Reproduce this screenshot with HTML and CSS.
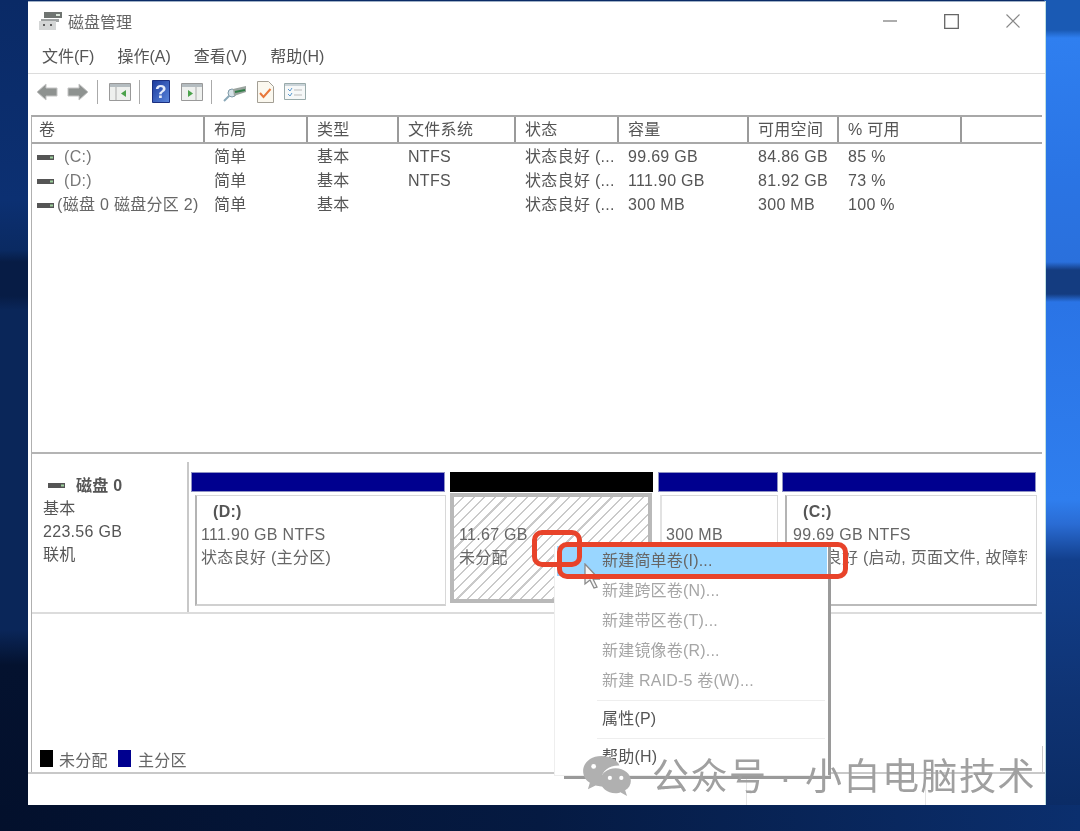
FILE: index.html
```html
<!DOCTYPE html>
<html lang="zh-CN">
<head>
<meta charset="utf-8">
<title>磁盘管理</title>
<link rel="stylesheet" href="styles.css">
</head>
<body>
<div class="desktop">
  <main class="window">
    <header class="titlebar">
      <svg class="app-icon" width="23" height="20" viewBox="0 0 23 20"><path d="M5 1h18v6H5z" fill="#6f7471"/><path d="M17 3h4v2h-4z" fill="#dbe6db"/><path d="M2 8h18v3H2z" fill="#9ea2a2"/><path d="M0 10h17v9H0z" fill="#d4d6d6"/><path d="M4 13h2v2H4zM11 13h2v2h-2z" fill="#5d5d5d"/></svg>
      <span class="title">磁盘管理</span>
      <div class="controls">
        <svg width="14" height="14" viewBox="0 0 14 14"><path d="M0 7h14" stroke="#777" stroke-width="1.2"/></svg>
        <svg width="15" height="15" viewBox="0 0 15 15"><path d="M.7.7h13.600v13.600H.7z" fill="none" stroke="#666" stroke-width="1.300"/></svg>
        <svg width="14" height="14" viewBox="0 0 14 14"><path d="M.5.5l13 13M13.500.5l-13 13" stroke="#888" stroke-width="1.100"/></svg>
      </div>
    </header>
    <nav class="menubar">
      <span>文件(F)</span><span>操作(A)</span><span>查看(V)</span><span>帮助(H)</span>
    </nav>
    <div class="toolbar">
      <svg class="tool" width="22" height="20" viewBox="0 0 22 20"><path d="M1 10l9-8v4h11v8H10v4z" fill="#8e9290" stroke="#c4c4c4"/></svg>
      <svg class="tool" width="22" height="20" viewBox="0 0 22 20"><path d="M21 10l-9-8v4H1v8h11v4z" fill="#8e9290" stroke="#c4c4c4"/></svg>
      <i class="sep"></i>
      <svg class="tool" width="22" height="18" viewBox="0 0 22 18"><path d="M.5.500h21v17H.5z" fill="#eef0ee" stroke="#999"/><path d="M1 1h20v3H1z" fill="#b4bcc0"/><path d="M7 4v13" stroke="#aaa"/><path d="M17 7v7l-5-3.500z" fill="#4ba24b"/></svg>
      <i class="sep"></i>
      <svg class="tool help" width="18" height="23" viewBox="0 0 18 23"><defs><linearGradient id="helpfill" x1="0" y1="0" x2="1" y2="1"><stop offset="0" stop-color="#1c3a9c"/><stop offset="1" stop-color="#5a86dc"/></linearGradient></defs><path d="M.5.500h17v22H.5z" fill="url(#helpfill)" stroke="#1b2f80"/><text x="9" y="18" text-anchor="middle" font-family="Liberation Sans" font-size="19" font-weight="700" fill="#e6ecfa">?</text></svg>
      <svg class="tool" width="22" height="18" viewBox="0 0 22 18"><path d="M.5.500h21v17H.5z" fill="#eef0ee" stroke="#999"/><path d="M1 1h20v3H1z" fill="#b4bcc0"/><path d="M15 4v13" stroke="#aaa"/><path d="M7 7v7l5-3.500z" fill="#4ba24b"/></svg>
      <i class="sep"></i>
      <svg class="tool key" width="24" height="20" viewBox="0 0 24 20"><path d="M1 19l5-5" stroke="#8aa8b8" stroke-width="2"/><circle cx="9" cy="11" r="4" fill="#d6e2e8" stroke="#7d97a5"/><path d="M10 7l13-3v6L11 14z" fill="#9aa39e"/><path d="M12 10l10-2" stroke="#2f7d46" stroke-width="2"/></svg>
      <svg class="tool doc" width="17" height="22" viewBox="0 0 17 22"><path d="M.5.500h11l5 5v16H.5z" fill="#fbf8ef" stroke="#a39f95"/><path d="M3 12l3.500 4 7-8" fill="none" stroke="#e8773a" stroke-width="2"/></svg>
      <svg class="tool" width="22" height="17" viewBox="0 0 22 17"><path d="M.5.500h21v16H.5z" fill="#f6f8f8" stroke="#9aa"/><path d="M1 1h20v2H1z" fill="#c9d3d8"/><path d="M4 6l2 2 2-3M4 11l2 2 2-3" fill="none" stroke="#5b9ad0"/><path d="M10 7h8M10 12h8" stroke="#bbb"/></svg>
    </div>

    <section class="volumes">
      <div class="vol-row vol-head">
        <span>卷</span><span>布局</span><span>类型</span><span>文件系统</span><span>状态</span><span>容量</span><span>可用空间</span><span>% 可用</span><span></span>
      </div>
      <div class="vol-row">
        <span class="name"><svg class="drive" width="17" height="5" viewBox="0 0 17 5"><path d="M0 0h17v5H0z" fill="#555"/><path d="M13 1.500h3v2h-3z" fill="#9cd09c"/></svg><b class="label">(C:)</b></span><span>简单</span><span>基本</span><span>NTFS</span><span>状态良好 (...</span><span>99.69 GB</span><span>84.86 GB</span><span>85 %</span><span></span>
      </div>
      <div class="vol-row">
        <span class="name"><svg class="drive" width="17" height="5" viewBox="0 0 17 5"><path d="M0 0h17v5H0z" fill="#555"/><path d="M13 1.500h3v2h-3z" fill="#9cd09c"/></svg><b class="label">(D:)</b></span><span>简单</span><span>基本</span><span>NTFS</span><span>状态良好 (...</span><span>111.90 GB</span><span>81.92 GB</span><span>73 %</span><span></span>
      </div>
      <div class="vol-row">
        <span class="name"><svg class="drive tight" width="17" height="5" viewBox="0 0 17 5"><path d="M0 0h17v5H0z" fill="#555"/><path d="M13 1.500h3v2h-3z" fill="#9cd09c"/></svg><b class="label tight">(磁盘 0 磁盘分区 2)</b></span><span>简单</span><span>基本</span><span></span><span>状态良好 (...</span><span>300 MB</span><span>300 MB</span><span>100 %</span><span></span>
      </div>
    </section>

    <section class="disks">
      <div class="disk-row">
        <div class="disk-info">
          <div class="disk-name"><svg width="17" height="5" viewBox="0 0 17 5"><path d="M0 0h17v5H0z" fill="#555"/><path d="M13 1.500h3v2h-3z" fill="#9cd09c"/></svg><strong>磁盘 0</strong></div>
          <div>基本</div>
          <div>223.56 GB</div>
          <div>联机</div>
        </div>
        <div class="partitions">
          <div class="part part-d">
            <div class="cap"></div>
            <div class="body"><strong>(D:)</strong><div>111.90 GB NTFS</div><div>状态良好 (主分区)</div></div>
          </div>
          <div class="part part-u">
            <div class="cap black"></div>
            <div class="body hatch"><strong>&nbsp;</strong><div>11.67 GB</div><div>未分配</div></div>
          </div>
          <div class="part part-s">
            <div class="cap"></div>
            <div class="body"><strong>&nbsp;</strong><div>300 MB</div><div>状态良好</div></div>
          </div>
          <div class="part part-c">
            <div class="cap"></div>
            <div class="body"><strong>(C:)</strong><div>99.69 GB NTFS</div><div class="clip">状态良好 (启动, 页面文件, 故障转储, 主分区)</div></div>
          </div>
        </div>
      </div>
      <div class="legend">
        <i class="swatch black"></i><span>未分配</span><i class="swatch blue"></i><span>主分区</span>
      </div>
    </section>
    <footer class="statusbar"><i></i><i></i></footer>
  </main>

  <div class="menu">
    <div class="item active">新建简单卷(I)...</div>
    <div class="item off">新建跨区卷(N)...</div>
    <div class="item off">新建带区卷(T)...</div>
    <div class="item off">新建镜像卷(R)...</div>
    <div class="item off">新建 RAID-5 卷(W)...</div>
    <hr>
    <div class="item">属性(P)</div>
    <hr>
    <div class="item">帮助(H)</div>
  </div>
  <svg class="cursor" width="16" height="26" viewBox="0 0 16 26"><path d="M1 1v20l5-4 4 8 3-1-4-8h6z" fill="#f4f4f4" stroke="#8a8a8a" stroke-width="1.300"/></svg>
  <div class="mark mark-small"></div>
  <div class="mark mark-wide"></div>
  <div class="watermark">
    <svg width="52" height="42" viewBox="0 0 52 44"><path d="M20 1C9 1 1 8 1 17c0 5 3 10 7 12l-2 7 8-4c2 0 4 1 6 1h2c-1-2-2-5-2-7 0-9 8-15 18-15h1C37 5 29 1 20 1z" fill="#b0b0b0"/><path d="M35 14c-9 0-16 6-16 13s7 13 16 13c2 0 4 0 5-1l7 4-2-6c4-2 6-6 6-10 0-7-7-13-16-13z" fill="#b0b0b0"/><circle cx="12" cy="12" r="2.500" fill="#fff"/><circle cx="29" cy="24" r="2.200" fill="#fff"/><circle cx="41" cy="24" r="2.200" fill="#fff"/></svg>
    <span>公众号 · 小白电脑技术</span>
  </div>
</div>
</body>
</html>
```

FILE: styles.css
```css
* { box-sizing: border-box; }
html, body { margin: 0; height: 100%; }
body { overflow: hidden; background: #06173d; font-family: "Liberation Sans", "Noto Sans CJK SC", sans-serif; }

.desktop {
  position: relative;
  width: 1080px;
  height: 831px;
  overflow: hidden;
  padding: 1px 35px 26px 28px;
  filter: blur(0.7px);
  background:
    linear-gradient(90deg, #03102c 0%, #051a42 50%, #0b2f6e 100%) left bottom / 100% 26px no-repeat,
    linear-gradient(180deg, #1a5ab4 0, #1a5ab4 30px, #2f7ff0 38px, #2a74e4 180px, #2a70dc 262px, #143c80 270px, #143c80 294px, #2a74e6 302px, #2f7eee 500px, #2a6cd4 524px, #123f8c 560px, #0f3373 700px, #0a2a62 100%) right top / 36px 100% no-repeat,
    linear-gradient(180deg, #0a2a66 0, #0c3072 200px, #0a2a62 250px, #071c45 262px, #071c45 296px, #0a2659 310px, #0a2659 630px, #04122f 665px, #03102c 100%);
}
.window {
  position: relative;
  display: flex;
  flex-direction: column;
  width: 1017px;
  height: 804px;
  background: #fff;
  color: #555;
  font-size: 16px;
  letter-spacing: 0.3px;
  border-top: 1px solid #9fb0c6;
  box-shadow: 1px 0 0 #bfe0e0;
}

.titlebar { display: flex; align-items: center; height: 38px; margin-bottom: 1px; padding: 0 25px 0 11px; flex: none; }
.app-icon { margin-right: 6px; }
.title { font-size: 16px; color: #666; letter-spacing: 0; }
.controls { margin-left: auto; display: flex; gap: 47px; align-items: center; }

.menubar { display: flex; gap: 23px; height: 33px; padding: 5px 14px 0; flex: none; border-bottom: 1px solid #dcdcdc; line-height: 22px; letter-spacing: 0; }
.toolbar { display: flex; align-items: center; height: 41px; padding: 0 8px 6px; flex: none; }
.tool { flex: none; margin-right: 9px; }
.tool.help { margin-left: 1px; margin-right: 11px; }
.tool.doc { margin-left: 1px; margin-right: 10px; }
.sep { width: 1px; height: 24px; background: #aaa; margin: 0 11px 0 -1px; flex: none; }

.volumes { height: 339px; flex: none; margin: 0 3px; border-top: 2px solid #a8a8a8; border-bottom: 2px solid #b4b4b4; border-left: 1px solid #b0b0b0; }
.vol-row { display: grid; grid-template-columns: 173px 103px 91px 117px 103px 130px 90px 123px 1fr; height: 24px; align-items: center; line-height: 24px; }
.vol-row > span { padding-left: 9px; white-space: nowrap; overflow: hidden; }
.vol-row .name { padding-left: 5px; overflow: visible; display: flex; align-items: center; }
.vol-head { height: 27px; margin-bottom: 1px; border-bottom: 2px solid #a8a8a8; }
.vol-head > span { border-right: 2px solid #9a9a9a; height: 25px; line-height: 25px; }
.vol-head > span:first-child { padding-left: 7px; }
.vol-head > span:last-child { border-right: 0; }
.drive { flex: none; margin-right: 10px; }
.drive.tight { margin-right: 3px; }
.label { font-weight: 400; color: #777; }
.label.tight { color: #666; }

.disks { flex: 1; display: flex; flex-direction: column; margin: 0 3px; min-height: 0; border-left: 1px solid #b0b0b0; }
.disk-row { display: flex; height: 144px; border-bottom: 2px solid #dcdcdc; margin-top: 16px; flex: none; }
.disk-info { width: 157px; flex: none; margin-top: -8px; padding: 12px 0 0 11px; line-height: 23px; border-right: 2px solid #c8c8c8; }
.disk-name { display: flex; align-items: center; gap: 11px; padding-left: 5px; }
.disk-name strong { color: #555; }
.partitions { display: flex; gap: 4px; padding: 2px 0 6px 2px; flex: 1; min-width: 0; }
.part { display: flex; flex-direction: column; flex: none; }
.part-d { width: 255px; }
.part-u { width: 204px; }
.part-s { width: 120px; }
.part-c { width: 255px; }
.cap { height: 20px; margin-right: 1px; background: #00008f; flex: none; box-shadow: inset 0 0 0 1px #8f92c4; }
.part-s .cap { margin-right: 0; }
.cap.black { background: #000; box-shadow: none; }
.body { flex: 1; min-height: 0; margin: 3px 0 0 4px; padding: 4px 0 0 4px; border: 1px solid #d8d8d8; border-left: 2px solid #b4b4b4; border-bottom: 2px solid #d0d0d0; line-height: 23px; white-space: nowrap; color: #666; overflow: hidden; }
.body strong { display: block; padding-left: 12px; color: #555; }
.part-s .body { margin-left: 2px; padding-left: 4px; border-left-color: #e2e2e2; }
.part-c .body { margin-left: 3px; padding-left: 6px; padding-right: 9px; border-bottom-color: #bbb; }
.part-c .body strong { padding-left: 10px; }
.clip { overflow: hidden; }
.part-u .hatch {
  margin: 1px 2px 3px 0;
  padding: 3px 0 0 5px;
  border: 4px solid #b9b9b9;
  background: repeating-linear-gradient(135deg, #fff 0 6px, #cacaca 6px 7.500px);
}

.legend { margin-top: auto; margin-right: -1px; display: flex; align-items: center; height: 26px; padding: 0 0 1px 8px; color: #666; border-right: 1px solid #c8c8c8; }
.legend span { margin: 0 10px 0 6px; }
.legend i + span + i + span { margin-left: 7px; }
.swatch { width: 13px; height: 17px; flex: none; }
.swatch.black { background: #000; }
.swatch.blue { background: #00008f; }
.statusbar { display: grid; grid-template-columns: 719px 179px 1fr; height: 33px; flex: none; border-top: 2px solid #c8c8c8; }
.statusbar i { border-right: 1px solid #e4e4e4; }

.menu {
  position: absolute;
  left: 554px;
  top: 546px;
  width: 277px;
  height: 230px;
  padding: 0 0 0 2px;
  background: #fff;
  border: 1px solid #eee;
  border-top: 0;
  border-right: 3px solid #9a9a9a;
  color: #555;
  font-size: 16px;
  letter-spacing: 0.2px;
}
.menu::after { content: ""; position: absolute; left: 9px; right: -3px; bottom: -4px; height: 3px; background: #9a9a9a; }
.item { height: 30px; line-height: 30px; padding-left: 45px; white-space: nowrap; }
.item.active { background: #99d6ff; color: #666; margin-right: 1px; }
.item.off { color: #a6a6a6; }
.menu hr { border: 0; border-top: 1px solid #eee; margin: 4px 3px 3px 40px; height: 0; }

.mark { position: absolute; border: 5px solid #e8432a; border-radius: 10px; }
.mark-small { left: 532px; top: 530px; width: 50px; height: 37px; }
.mark-wide { left: 557px; top: 542px; width: 291px; height: 37px; }
.cursor { position: absolute; left: 584px; top: 563px; }

.watermark { position: absolute; left: 581px; top: 752px; display: flex; align-items: center; gap: 19px; color: #a0a0a0; font-size: 37px; letter-spacing: 1.500px; line-height: 44px; white-space: nowrap; }
.watermark span { margin-top: 4px; }
```
